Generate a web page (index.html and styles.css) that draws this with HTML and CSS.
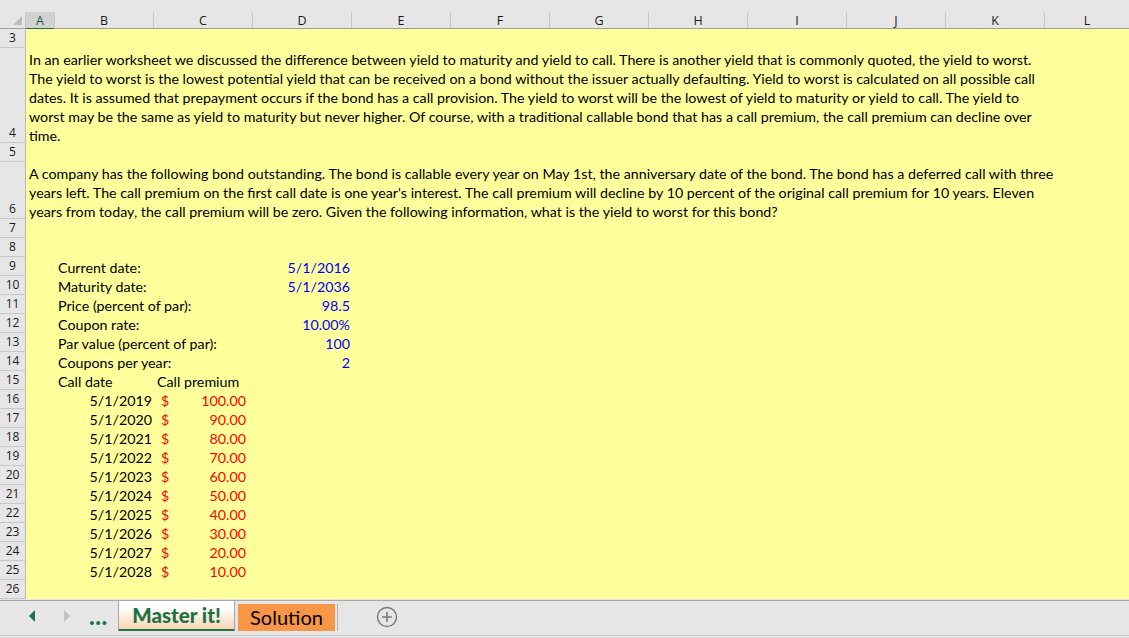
FILE: index.html
```html
<!DOCTYPE html>
<html>
<head>
<meta charset="utf-8">
<link rel="stylesheet" href="styles.css">
</head>
<body>
<div class="app">
  <div class="topstrip"></div>
  <div class="colhead">
    <div class="corner"><span class="tri"></span></div>
    <div class="ch sel w29">A</div>
    <div class="ch w99">B</div>
    <div class="ch w99">C</div>
    <div class="ch w99">D</div>
    <div class="ch w99">E</div>
    <div class="ch w99">F</div>
    <div class="ch w99">G</div>
    <div class="ch w99">H</div>
    <div class="ch w99">I</div>
    <div class="ch w99">J</div>
    <div class="ch w99">K</div>
    <div class="ch last">L</div>
  </div>
  <div class="sheet">
    <div class="row h19"><div class="rh">3</div><div class="cells"></div></div>
    <div class="row h95"><div class="rh">4</div><div class="cells">
      <div class="txt span-ak">
        <div>In an earlier worksheet we discussed the difference between yield to maturity and yield to call. There is another yield that is commonly quoted, the yield to worst.</div>
        <div>The yield to worst is the lowest potential yield that can be received on a bond without the issuer actually defaulting. Yield to worst is calculated on all possible call</div>
        <div>dates. It is assumed that prepayment occurs if the bond has a call provision. The yield to worst will be the lowest of yield to maturity or yield to call. The yield to</div>
        <div>worst may be the same as yield to maturity but never higher. Of course, with a traditional callable bond that has a call premium, the call premium can decline over</div>
        <div>time.</div>
      </div>
    </div></div>
    <div class="row h19"><div class="rh">5</div><div class="cells"></div></div>
    <div class="row h57"><div class="rh">6</div><div class="cells">
      <div class="txt span-ak">
        <div>A company has the following bond outstanding. The bond is callable every year on May 1st, the anniversary date of the bond. The bond has a deferred call with three</div>
        <div>years left. The call premium on the first call date is one year's interest. The call premium will decline by 10 percent of the original call premium for 10 years. Eleven</div>
        <div>years from today, the call premium will be zero. Given the following information, what is the yield to worst for this bond?</div>
      </div>
    </div></div>
    <div class="row h19"><div class="rh">7</div><div class="cells"></div></div>
    <div class="row h19"><div class="rh">8</div><div class="cells"></div></div>
    <div class="row h19"><div class="rh">9</div><div class="cells"><div class="c colB">Current date:</div><div class="c colD num blue">5/1/2016</div></div></div>
    <div class="row h19"><div class="rh">10</div><div class="cells"><div class="c colB">Maturity date:</div><div class="c colD num blue">5/1/2036</div></div></div>
    <div class="row h19"><div class="rh">11</div><div class="cells"><div class="c colB">Price (percent of par):</div><div class="c colD num blue">98.5</div></div></div>
    <div class="row h19"><div class="rh">12</div><div class="cells"><div class="c colB">Coupon rate:</div><div class="c colD num blue">10.00%</div></div></div>
    <div class="row h19"><div class="rh">13</div><div class="cells"><div class="c colB">Par value (percent of par):</div><div class="c colD num blue">100</div></div></div>
    <div class="row h19"><div class="rh">14</div><div class="cells"><div class="c colB">Coupons per year:</div><div class="c colD num blue">2</div></div></div>
    <div class="row h19"><div class="rh">15</div><div class="cells"><div class="c colB">Call date</div><div class="c colC">Call premium</div></div></div>
    <div class="row h19"><div class="rh">16</div><div class="cells"><div class="c colB num">5/1/2019</div><div class="c colC acct"><span>$</span><span>100.00</span></div></div></div>
    <div class="row h19"><div class="rh">17</div><div class="cells"><div class="c colB num">5/1/2020</div><div class="c colC acct"><span>$</span><span>90.00</span></div></div></div>
    <div class="row h19"><div class="rh">18</div><div class="cells"><div class="c colB num">5/1/2021</div><div class="c colC acct"><span>$</span><span>80.00</span></div></div></div>
    <div class="row h19"><div class="rh">19</div><div class="cells"><div class="c colB num">5/1/2022</div><div class="c colC acct"><span>$</span><span>70.00</span></div></div></div>
    <div class="row h19"><div class="rh">20</div><div class="cells"><div class="c colB num">5/1/2023</div><div class="c colC acct"><span>$</span><span>60.00</span></div></div></div>
    <div class="row h19"><div class="rh">21</div><div class="cells"><div class="c colB num">5/1/2024</div><div class="c colC acct"><span>$</span><span>50.00</span></div></div></div>
    <div class="row h19"><div class="rh">22</div><div class="cells"><div class="c colB num">5/1/2025</div><div class="c colC acct"><span>$</span><span>40.00</span></div></div></div>
    <div class="row h19"><div class="rh">23</div><div class="cells"><div class="c colB num">5/1/2026</div><div class="c colC acct"><span>$</span><span>30.00</span></div></div></div>
    <div class="row h19"><div class="rh">24</div><div class="cells"><div class="c colB num">5/1/2027</div><div class="c colC acct"><span>$</span><span>20.00</span></div></div></div>
    <div class="row h19"><div class="rh">25</div><div class="cells"><div class="c colB num">5/1/2028</div><div class="c colC acct"><span>$</span><span>10.00</span></div></div></div>
    <div class="row h19"><div class="rh">26</div><div class="cells"></div></div>
  </div>
  <div class="tabbar">
    <div class="nav">
      <svg class="arrow" width="8" height="12" viewBox="0 0 8 12"><polygon points="7,0 7,12 1,6" fill="#217346"/></svg>
      <svg class="arrow" width="8" height="12" viewBox="0 0 8 12"><polygon points="1,0 1,12 7,6" fill="#c2c2c2"/></svg>
      <span class="dots">...</span>
    </div>
    <div class="tab active">Master it!</div>
    <div class="tab orange">Solution</div>
    <div class="tabsep"></div>
    <svg class="plus" width="22" height="22" viewBox="0 0 22 22"><circle cx="11" cy="11" r="9.5" fill="none" stroke="#7a7a7a" stroke-width="1.4"/><path d="M11 6v10M6 11h10" stroke="#7a7a7a" stroke-width="1.6"/></svg>
  </div>
</div>
</body>
</html>
```
FILE: styles.css
```css
* { box-sizing: border-box; }
html, body { margin: 0; padding: 0; }
body {
  width: 1129px;
  height: 638px;
  overflow: hidden;
  background: #e6e6e6;
  font-family: Lato, "Liberation Sans", sans-serif;
}
.app { width: 1129px; height: 638px; display: flex; flex-direction: column; }
.topstrip { height: 12px; background: #e6e6e6; flex: none; }

.colhead {
  display: flex;
  height: 17px;
  flex: none;
  border-bottom: 1px solid #9f9f9f;
  background: #e6e6e6;
  font-family: "Open Sans", "Liberation Sans", sans-serif;
  font-size: 12.5px;
  color: #1a1a1a;
}
.corner {
  width: 26px;
  flex: none;
  position: relative;
  border-right: 1px solid #c8c8c8;
}
.tri {
  position: absolute;
  right: 3px;
  bottom: 3px;
  width: 0; height: 0;
  border-left: 9px solid transparent;
  border-bottom: 9px solid #bdbdbd;
}
.ch {
  flex: none;
  text-align: center;
  line-height: 17px;
  border-right: 1px solid #c8c8c8;
}
.w29 { width: 29px; }
.w99 { width: 99px; }
.ch.last { flex: 1; border-right: none; }
.ch.sel {
  background: #d2d2d2;
  color: #1d5a39;
  border-bottom: 2px solid #217346;
  height: 18px;
}

.sheet { flex: none; display: flex; flex-direction: column; }
.row { display: flex; flex: none; }
.h19 { height: 19px; }
.h57 { height: 57px; }
.h95 { height: 95px; }
.rh {
  width: 26px;
  flex: none;
  display: flex;
  align-items: flex-end;
  justify-content: center;
  padding-bottom: 0;
  background: #e6e6e6;
  border-bottom: 1px solid #c6c6c6;
  border-right: 1px solid #b8b8b8;
  font-family: "Open Sans", "Liberation Sans", sans-serif;
  font-size: 12px;
  line-height: 18px;
  color: #1a1a1a;
}
.cells {
  flex: 1;
  background: #ffff9c;
  display: grid;
  grid-template-columns: 29px repeat(10, 99px) 1fr;
  grid-template-rows: 100%;
  font-size: 14.25px;
  color: #000;
}
.txt {
  padding: 2px 0 0 3px;
  line-height: 19px;
  white-space: nowrap;
}
.span-ak { grid-column: 1 / 12; grid-row: 1; }
.c {
  grid-row: 1;
  padding: 1px 3px 0 3px;
  line-height: 19px;
  white-space: nowrap;
}
.colB { grid-column: 2; }
.colC { grid-column: 3; }
.colD { grid-column: 4; }
.num { text-align: right; padding-right: 2px; }
.blue { color: #0000ff; }
.acct {
  display: flex;
  justify-content: space-between;
  color: #ff0000;
  padding-left: 7px;
  padding-right: 7px;
}

.tabbar {
  flex: 1;
  display: flex;
  align-items: flex-start;
  border-top: 1px solid #a8a8a8;
  margin-top: 1px;
  position: relative;
}
.tabbar::after {
  content: "";
  position: absolute;
  left: 0; right: 0; top: 34px;
  border-top: 1px solid #c6c6c6;
}
.nav {
  width: 118px;
  flex: none;
  display: flex;
  align-items: center;
  height: 30px;
  padding-left: 28px;
}
.arrow { flex: none; margin-right: 27px; }
.arrow + .arrow { margin-right: 18px; }
.dots {
  color: #217346;
  font-weight: 900;
  font-size: 24px;
  letter-spacing: 0.5px;
  line-height: 30px;
  padding-top: 0;
}
.tab {
  flex: none;
  font-size: 20px;
  text-align: center;
}
.tab.active {
  width: 117px;
  height: 30px;
  background: linear-gradient(#ffffff 25%, #fbd4b4);
  border-left: 1px solid #a6a6a6;
  border-right: 1px solid #a6a6a6;
  border-bottom: 2px solid #217346;
  color: #1e7145;
  font-weight: 900;
  font-size: 20.5px;
  line-height: 29px;
}
.tab.orange {
  width: 97px;
  height: 27px;
  margin-top: 3px;
  margin-left: 3px;
  background: #f79646;
  color: #000;
  line-height: 26px;
}
.tabsep {
  width: 1px;
  height: 27px;
  margin-top: 3px;
  margin-left: 2px;
  background: #b0b0b0;
}
.plus { flex: none; margin-left: 38px; margin-top: 5px; }
```
